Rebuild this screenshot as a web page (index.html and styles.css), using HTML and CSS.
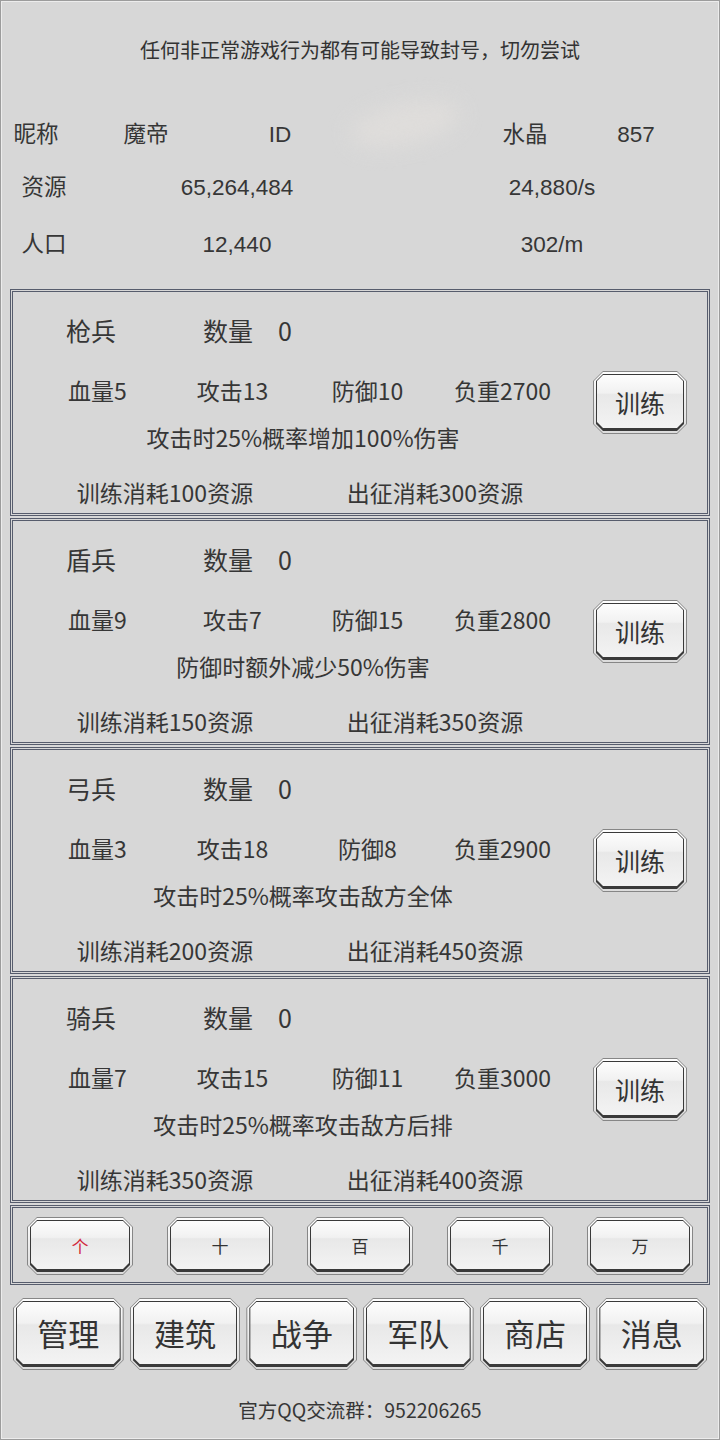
FILE: index.html
```html
<!DOCTYPE html>
<html lang="zh-CN">
<head>
    <meta charset="UTF-8">
    <meta name="viewport" content="width=device-width, initial-scale=1.0">
    <title>军队</title>
    <link rel="stylesheet" href="styles.css">
</head>
<body>
<div class="page">

    <div class="notice">任何非正常游戏行为都有可能导致封号，切勿尝试</div>

    <div class="info info-top">
        <span>昵称</span>
        <span>魔帝</span>
        <span>ID</span>
        <span><i class="hidden-id"></i></span>
        <span>水晶</span>
        <span>857</span>
    </div>
    <div class="info info-res">
        <span>资源</span>
        <span>65,264,484</span>
        <span>24,880/s</span>
    </div>
    <div class="info info-res">
        <span>人口</span>
        <span>12,440</span>
        <span>302/m</span>
    </div>

    <div class="units">
        <div class="card">
            <div class="card-info">
                <div class="card-title">
                    <span class="unit-name">枪兵</span>
                    <span class="unit-count">数量</span>
                    <span>0</span>
                </div>
                <div class="card-stats">
                    <span>血量5</span><span>攻击13</span><span>防御10</span><span>负重2700</span>
                </div>
                <div class="card-desc">攻击时25%概率增加100%伤害</div>
                <div class="card-cost">
                    <span>训练消耗100资源</span><span>出征消耗300资源</span>
                </div>
            </div>
            <div class="card-side">
                <div class="btn btn-train"><div class="btn-ring"><div class="btn-face"><span class="btn-label">训练</span></div></div></div>
            </div>
        </div>

        <div class="card">
            <div class="card-info">
                <div class="card-title">
                    <span class="unit-name">盾兵</span>
                    <span class="unit-count">数量</span>
                    <span>0</span>
                </div>
                <div class="card-stats">
                    <span>血量9</span><span>攻击7</span><span>防御15</span><span>负重2800</span>
                </div>
                <div class="card-desc">防御时额外减少50%伤害</div>
                <div class="card-cost">
                    <span>训练消耗150资源</span><span>出征消耗350资源</span>
                </div>
            </div>
            <div class="card-side">
                <div class="btn btn-train"><div class="btn-ring"><div class="btn-face"><span class="btn-label">训练</span></div></div></div>
            </div>
        </div>

        <div class="card">
            <div class="card-info">
                <div class="card-title">
                    <span class="unit-name">弓兵</span>
                    <span class="unit-count">数量</span>
                    <span>0</span>
                </div>
                <div class="card-stats">
                    <span>血量3</span><span>攻击18</span><span>防御8</span><span>负重2900</span>
                </div>
                <div class="card-desc">攻击时25%概率攻击敌方全体</div>
                <div class="card-cost">
                    <span>训练消耗200资源</span><span>出征消耗450资源</span>
                </div>
            </div>
            <div class="card-side">
                <div class="btn btn-train"><div class="btn-ring"><div class="btn-face"><span class="btn-label">训练</span></div></div></div>
            </div>
        </div>

        <div class="card">
            <div class="card-info">
                <div class="card-title">
                    <span class="unit-name">骑兵</span>
                    <span class="unit-count">数量</span>
                    <span>0</span>
                </div>
                <div class="card-stats">
                    <span>血量7</span><span>攻击15</span><span>防御11</span><span>负重3000</span>
                </div>
                <div class="card-desc">攻击时25%概率攻击敌方后排</div>
                <div class="card-cost">
                    <span>训练消耗350资源</span><span>出征消耗400资源</span>
                </div>
            </div>
            <div class="card-side">
                <div class="btn btn-train"><div class="btn-ring"><div class="btn-face"><span class="btn-label">训练</span></div></div></div>
            </div>
        </div>

        <div class="card multiplier">
            <div class="btn btn-mult active"><div class="btn-ring"><div class="btn-face"><span class="btn-label">个</span></div></div></div>
            <div class="btn btn-mult"><div class="btn-ring"><div class="btn-face"><span class="btn-label">十</span></div></div></div>
            <div class="btn btn-mult"><div class="btn-ring"><div class="btn-face"><span class="btn-label">百</span></div></div></div>
            <div class="btn btn-mult"><div class="btn-ring"><div class="btn-face"><span class="btn-label">千</span></div></div></div>
            <div class="btn btn-mult"><div class="btn-ring"><div class="btn-face"><span class="btn-label">万</span></div></div></div>
        </div>
    </div>

    <div class="nav">
        <div class="btn btn-nav"><div class="btn-ring"><div class="btn-face"><span class="btn-label">管理</span></div></div></div>
        <div class="btn btn-nav"><div class="btn-ring"><div class="btn-face"><span class="btn-label">建筑</span></div></div></div>
        <div class="btn btn-nav"><div class="btn-ring"><div class="btn-face"><span class="btn-label">战争</span></div></div></div>
        <div class="btn btn-nav"><div class="btn-ring"><div class="btn-face"><span class="btn-label">军队</span></div></div></div>
        <div class="btn btn-nav"><div class="btn-ring"><div class="btn-face"><span class="btn-label">商店</span></div></div></div>
        <div class="btn btn-nav"><div class="btn-ring"><div class="btn-face"><span class="btn-label">消息</span></div></div></div>
    </div>

    <div class="footer">官方QQ交流群：952206265</div>

</div>
</body>
</html>
```

FILE: styles.css
```css
body {
    margin: 0;
    background: #d7d7d7;
    color: #363636;
    font-family: "Noto Sans CJK SC", "Noto Sans", sans-serif;
}

.page {
    width: 720px;
    height: 1440px;
    box-sizing: border-box;
    box-shadow: inset 0 0 0 1px #9c9c9c, inset 0 0 0 2px #ececec;
    overflow: hidden;
}

.notice {
    height: 102px;
    line-height: 100px;
    text-align: center;
    font-size: 20px;
    color: #333;
}

.info {
    display: grid;
    height: 57px;
    align-items: baseline;
    line-height: 57px;
    font-family: "Liberation Sans", "Noto Sans CJK SC", sans-serif;
    font-size: 22.5px;
    text-align: center;
}

.info-top {
    grid-template-columns: 72px 148px 120px 130px 110px 112px;
}

.info-res {
    grid-template-columns: 88px 298px 332px;
}

.hidden-id {
    display: inline-block;
    width: 110px;
    height: 40px;
    border-radius: 50%;
    background: #dfdddb;
    filter: blur(10px);
    transform: rotate(-12deg) translateY(2px);
}

.units {
    margin: 16px 10px 0 10px;
    display: flex;
    flex-direction: column;
    gap: 2px;
}

.card {
    height: 227px;
    box-sizing: border-box;
    border: 3px double #565c6c;
    display: flex;
}

.card-info {
    width: 580px;
    font-size: 23px;
    line-height: 24px;
}

.card-title {
    display: flex;
    margin-top: 26px;
    padding-left: 53px;
    font-size: 25px;
}

.unit-name {
    width: 137px;
}

.unit-count {
    width: 75px;
}

.card-stats {
    display: grid;
    grid-template-columns: repeat(4, 135px);
    padding-left: 17px;
    margin-top: 36px;
    text-align: center;
}

.card-desc {
    margin-top: 23px;
    text-align: center;
}

.card-cost {
    display: grid;
    grid-template-columns: 270px 270px;
    padding-left: 17px;
    margin-top: 31px;
    text-align: center;
}

.card-side {
    padding-top: 79px;
}

/* chamfered bevel buttons */
.btn,
.btn-ring,
.btn-face,
.btn-label {
    display: flex;
    box-sizing: border-box;
    clip-path: polygon(var(--c) 0, calc(100% - var(--c)) 0, 100% var(--c), 100% calc(100% - var(--c)),
        calc(100% - var(--c)) 100%, var(--c) 100%, 0 calc(100% - var(--c)), 0 var(--c));
}

.btn {
    --c: 10px;
    background: #868686;
    padding: 1px;
}

.btn-ring {
    --c: 9px;
    flex: 1;
    background: linear-gradient(#fdfdfd, #dcdcdc);
    padding: 2px;
}

.btn-face {
    --c: 7px;
    flex: 1;
    background: #3a3a3a;
    padding: 1px 1px 3px 1px;
}

.btn-label {
    --c: 6px;
    flex: 1;
    align-items: center;
    justify-content: center;
    background: linear-gradient(#fdfdfd 0%, #f1f1f1 34%, #e8e8e8 37%, #f3f3f3 100%);
    color: #333;
}

.btn-train {
    width: 94px;
    height: 63px;
    font-size: 25px;
}

.multiplier {
    height: 80px;
    padding: 9px 0 0 14px;
    gap: 34px;
}

.btn-mult {
    width: 106px;
    height: 58px;
    font-size: 17px;
}

.btn-mult.active .btn-label {
    color: #d2283c;
}

.nav {
    display: grid;
    grid-template-columns: repeat(6, 1fr);
    gap: 6px;
    padding: 0 13px;
    margin-top: 13px;
}

.btn-nav {
    height: 72px;
    font-size: 31px;
}

.btn-nav .btn-label {
    padding-bottom: 2px;
}

.footer {
    margin-top: 29px;
    text-align: center;
    font-size: 19.5px;
    line-height: 22px;
}
```
